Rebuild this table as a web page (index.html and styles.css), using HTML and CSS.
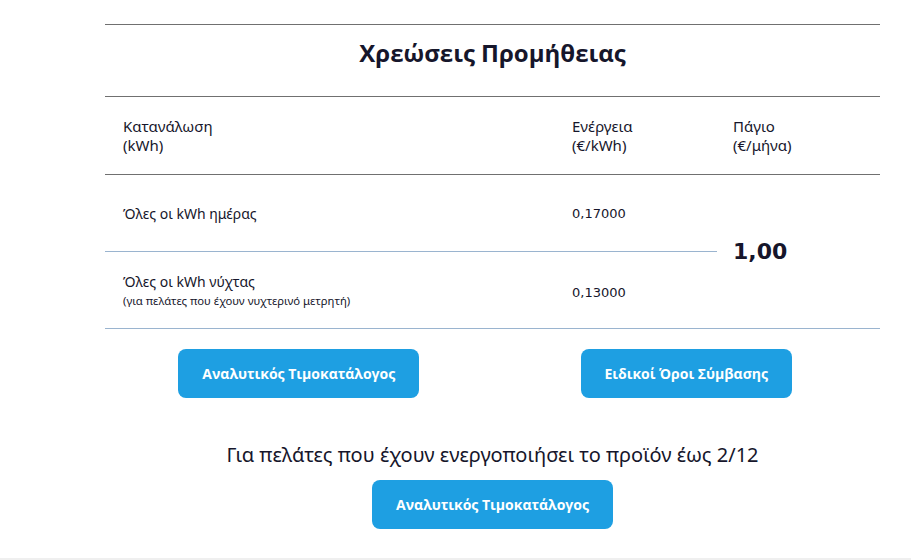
FILE: index.html
```html
<!DOCTYPE html>
<html>
<head>
    <meta charset="utf-8">
    <link rel="stylesheet" href="styles.css">
    <title>Χρεώσεις Προμήθειας</title>
</head>
<body>
    <div class="charges">
        <h2 class="charges-title">Χρεώσεις Προμήθειας</h2>

        <div class="price-table">
            <div class="cell head first">Κατανάλωση<br>(kWh)</div>
            <div class="cell head">Ενέργεια<br>(€/kWh)</div>
            <div class="cell head last">Πάγιο<br>(€/μήνα)</div>

            <div class="cell label first sep">Όλες οι kWh ημέρας</div>
            <div class="cell num sep">0,17000</div>
            <div class="cell fixed">1,00</div>

            <div class="cell label first">
                Όλες οι kWh νύχτας
                <span class="note">(για πελάτες που έχουν νυχτερινό μετρητή)</span>
            </div>
            <div class="cell num">0,13000</div>
        </div>

        <div class="actions">
            <div class="action"><a class="btn" href="#">Αναλυτικός Τιμοκατάλογος</a></div>
            <div class="action"><a class="btn" href="#">Ειδικοί Όροι Σύμβασης</a></div>
        </div>

        <p class="older">Για πελάτες που έχουν ενεργοποιήσει το προϊόν έως 2/12</p>
        <div class="action"><a class="btn" href="#">Αναλυτικός Τιμοκατάλογος</a></div>
    </div>
    <div class="footer-strip"></div>
</body>
</html>
```

FILE: styles.css
```css
body {
    margin: 0;
    background-color: white;
    color: #16162b;
    font-family: "Noto Sans", "Open Sans", sans-serif;
}
.charges {
    width: 775px;
    margin-left: 105px;
    padding-top: 24px;
    height: 534px;
}
.charges-title {
    margin: 0;
    border-top: 1px solid #707070;
    border-bottom: 1px solid #707070;
    height: 71px;
    line-height: 56px;
    text-align: center;
    font-family: "Open Sans", sans-serif;
    font-size: 24px;
    font-weight: 700;
}
.price-table {
    display: grid;
    grid-template-columns: 451px 161px 1fr;
    border-bottom: 1px solid #9ab4cf;
}
.cell {
    padding: 0 16px;
}
.cell.first {
    padding-left: 18px;
}
.head {
    height: 78px;
    padding-top: 20px;
    box-sizing: border-box;
    font-size: 15px;
    line-height: 19px;
    border-bottom: 1px solid #707070;
}
.label, .num {
    height: 76px;
    display: flex;
    flex-direction: column;
    justify-content: center;
    font-size: 14px;
}
.sep {
    border-bottom: 1px solid #9ab4cf;
}
.num {
    font-family: "DejaVu Sans", Verdana, sans-serif;
    font-size: 13px;
}
.price-table > .num:last-child {
    padding-top: 4px;
    box-sizing: border-box;
}
.note {
    font-size: 11.3px;
    margin-top: 2px;
}
.fixed {
    grid-row: span 2;
    display: flex;
    align-items: center;
    font-family: "DejaVu Sans", Verdana, sans-serif;
    font-weight: 700;
    font-size: 22px;
}
.actions {
    display: flex;
    margin-top: 20px;
}
.action {
    flex: 1;
    display: flex;
    justify-content: center;
}
.btn {
    display: inline-block;
    background-color: #1e9fe2;
    color: white;
    text-decoration: none;
    font-family: "Open Sans", sans-serif;
    font-weight: 700;
    font-size: 14px;
    line-height: 49px;
    padding: 0 24px;
    border-radius: 8px;
}
.older {
    margin: 43px 0 12px;
    line-height: 27px;
    text-align: center;
    font-size: 20px;
}
.footer-strip {
    height: 2px;
    background-color: #efefef;
}
```
